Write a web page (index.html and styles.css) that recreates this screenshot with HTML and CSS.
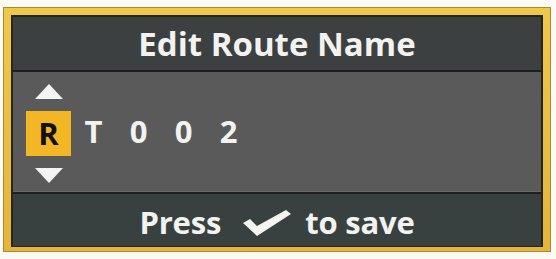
FILE: index.html
```html
<!DOCTYPE html>
<html>
<head>
<meta charset="utf-8">
<link rel="stylesheet" href="styles.css">
</head>
<body>
<div class="frame">
  <div class="inner">
    <div class="header">Edit Route Name</div>
    <div class="middle">
      <div class="editor">
        <div class="cell active-col">
          <span class="arrow up"></span>
          <span class="box">R</span>
          <span class="arrow down"></span>
        </div>
        <div class="cell">T</div>
        <div class="cell">0</div>
        <div class="cell">0</div>
        <div class="cell">2</div>
      </div>
    </div>
    <div class="footer">
      <span>Press</span>
      <svg class="check" width="48" height="26" viewBox="0 0 48 26"><polygon points="0,13 7,9 14,16 43,0 48,4 14,26" fill="#f4f4f2"/></svg>
      <span>to save</span>
    </div>
  </div>
</div>
</body>
</html>
```
FILE: styles.css
```css
html, body {
  margin: 0;
  padding: 0;
  background: #fbfaf3;
}
body {
  width: 556px;
  height: 259px;
  overflow: hidden;
  font-family: "Open Sans", "DejaVu Sans", sans-serif;
  font-weight: 700;
  color: #f2f3f0;
}
.frame {
  margin: 7px 0 0 3px;
  width: 548px;
  height: 245px;
  box-sizing: border-box;
  border: 1px solid #a8883a;
  background: linear-gradient(#f0c84a, #e3b53a);
  padding: 7px 7px 4px 7px;
}
.inner {
  height: 100%;
  box-sizing: border-box;
  border: 2px solid #26261e;
  border-bottom-width: 1px;
  background: #1e2020;
  display: flex;
  flex-direction: column;
  gap: 2px;
}
.header {
  height: 53px;
  background: #3c4040;
  display: flex;
  align-items: center;
  justify-content: center;
  font-size: 33px;
}
.middle {
  height: 119px;
  background: #5a5a5a;
  border-bottom: 1px solid #6a6a6a;
  display: flex;
  align-items: center;
  padding-left: 13px;
}
.editor {
  display: grid;
  grid-template-columns: repeat(5, 45px);
  align-items: center;
  font-size: 31px;
}
.cell {
  text-align: center;
  line-height: 45px;
}
.active-col {
  display: flex;
  flex-direction: column;
  align-items: center;
  gap: 12px;
  margin-top: 3px;
}
.box {
  width: 45px;
  height: 45px;
  background: #f3b624;
  color: #111;
  line-height: 45px;
  text-align: center;
}
.arrow {
  width: 0;
  height: 0;
  border-left: 14px solid transparent;
  border-right: 14px solid transparent;
}
.arrow.up {
  border-bottom: 15px solid #f4f4f4;
}
.arrow.down {
  border-top: 15px solid #f4f4f4;
}
.footer {
  flex: 1;
  background: #394140;
  display: flex;
  align-items: center;
  justify-content: center;
  font-size: 31px;
  letter-spacing: -0.2px;
  padding-top: 4px;
}
.check {
  margin: 2px 14px 0 22px;
}
```
